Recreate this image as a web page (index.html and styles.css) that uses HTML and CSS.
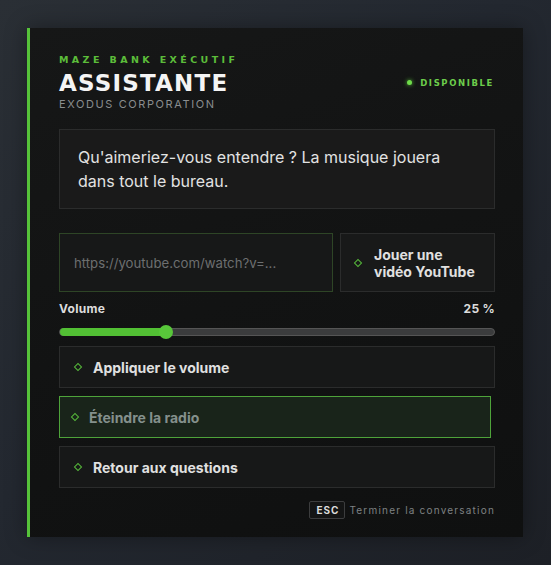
FILE: index.html
```html
<!DOCTYPE html>
<html lang="fr">
<head>
<meta charset="utf-8">
<link rel="stylesheet" href="styles.css">
</head>
<body>
<div class="card">
  <header class="head">
    <div class="titles">
      <div class="eyebrow">MAZE BANK EXÉCUTIF</div>
      <h1 class="title">ASSISTANTE</h1>
      <div class="sub">EXODUS CORPORATION</div>
    </div>
    <div class="status"><span class="dot"></span>DISPONIBLE</div>
  </header>

  <div class="message">Qu'aimeriez-vous entendre ? La musique jouera dans tout le bureau.</div>

  <div class="urlrow">
    <div class="input">https://youtube.com/watch?v=...</div>
    <div class="playbtn"><span class="diamond"></span><span>Jouer une<br>vidéo YouTube</span></div>
  </div>

  <div class="volhead"><span>Volume</span><span>25 %</span></div>
  <div class="slider"><div class="fill" style="width:24.5%"></div><div class="thumb" style="left:24.5%"></div></div>

  <div class="options">
    <div class="opt"><span class="diamond"></span>Appliquer le volume</div>
    <div class="opt active"><span class="diamond"></span>Éteindre la radio</div>
    <div class="opt"><span class="diamond"></span>Retour aux questions</div>
  </div>

  <footer class="foot"><span class="kbd">ESC</span><span class="hint">Terminer la conversation</span></footer>
</div>
</body>
</html>
```
FILE: styles.css
```css
html, body { margin: 0; padding: 0; }
body {
  width: 551px; height: 565px; overflow: hidden;
  background: linear-gradient(135deg, #2a2f35 0%, #232830 45%, #1d2026 100%);
  font-family: "Inter", "Liberation Sans", sans-serif;
  padding: 28px 0 0 27px;
  box-sizing: border-box;
}
.card {
  width: 496px; height: 509px; box-sizing: border-box;
  border-left: 3px solid #56c23a;
  background: linear-gradient(160deg, #161717 0%, #121313 50%, #0f1010 100%);
  padding: 26px 28px 0 29px;
  display: flex; flex-direction: column;
  box-shadow: 0 0 20px rgba(0,0,0,0.35);
}
.head { display: flex; justify-content: space-between; align-items: center; }
.eyebrow {
  font-family: "DejaVu Sans", sans-serif; font-weight: bold;
  font-size: 9.5px; letter-spacing: 3.4px; color: #5cbd3a; line-height: 12px;
}
.title {
  margin: 5px 0 0; font-family: "DejaVu Sans", sans-serif; font-weight: bold;
  font-size: 23px; line-height: 24px; color: #f4f4f4; letter-spacing: 1.2px;
}
.sub {
  margin-top: 2px; font-size: 11px; letter-spacing: 1.6px; color: #8a8d8f; line-height: 14px;
}
.status {
  display: flex; align-items: center; gap: 8px;
  font-family: "DejaVu Sans", sans-serif; font-weight: bold;
  font-size: 8.5px; letter-spacing: 1.6px; color: #6ccd4b;
  margin-right: 1px; margin-top: 0px;
}
.dot { width: 5px; height: 5px; border-radius: 50%; background: #6fdc4a; box-shadow: 0 0 4px #5ac83a; }
.message {
  margin-top: 18px;
  background: #1a1a1a; border: 1px solid #2b2c2c;
  padding: 15px 20px 15px 18px;
  font-size: 16px; line-height: 24px; color: #e2e2e2;
}
.urlrow { margin-top: 24px; display: flex; gap: 7px; height: 59px; }
.input {
  flex: 1; box-sizing: border-box; border: 1px solid #2e4526; background: #171818;
  display: flex; align-items: center; padding-left: 14px;
  font-size: 13.2px; color: #6d6f70;
}
.playbtn {
  width: 155px; box-sizing: border-box; border: 1px solid #2b2c2c; background: #181919;
  display: flex; align-items: center; gap: 13px; padding-left: 14px;
  font-size: 14px; font-weight: 700; line-height: 17px; color: #e0e0e0;
}
.diamond {
  width: 4px; height: 4px; border: 1.5px solid #56b83a; transform: rotate(45deg);
  flex: none;
}
.volhead {
  margin-top: 9px; display: flex; justify-content: space-between;
  font-size: 12px; font-weight: 700; color: #dcdcdc; line-height: 15px; letter-spacing: 0.3px;
}
.slider {
  position: relative; margin-top: 12px; height: 6px; border-radius: 4px;
  background: #3b3c3d; border: 1px solid #555;
}
.fill { position: absolute; left: 0; top: -1px; bottom: -1px; background: #52c034; border-radius: 4px 0 0 4px; }
.thumb {
  position: absolute; top: 50%; width: 14px; height: 14px; border-radius: 50%;
  background: #58c73a; transform: translate(-50%, -50%);
}
.options { margin-top: 10px; display: flex; flex-direction: column; gap: 8px; }
.opt {
  height: 42px; box-sizing: border-box; border: 1px solid #2b2c2c; background: #171818;
  display: flex; align-items: center; gap: 12px; padding-left: 15px;
  font-size: 14px; font-weight: 700; color: #e0e0e0;
}
.opt.active {
  margin-right: 4px; padding-left: 12px; gap: 11px;
  border-color: #4ea33a; background: #19241a; color: #84908c;
}
.foot {
  margin-top: 13px; display: flex; justify-content: flex-end; align-items: center; gap: 4px;
}
.kbd {
  border: 1px solid #3c3d3e; border-radius: 2px; background: #141515;
  font-size: 10px; font-weight: 700; color: #dcdcdc; letter-spacing: 1px;
  padding: 2px 5px 2px 6px; line-height: 12px;
}
.hint { font-size: 10px; color: #7e8183; letter-spacing: 1.2px; }
```
